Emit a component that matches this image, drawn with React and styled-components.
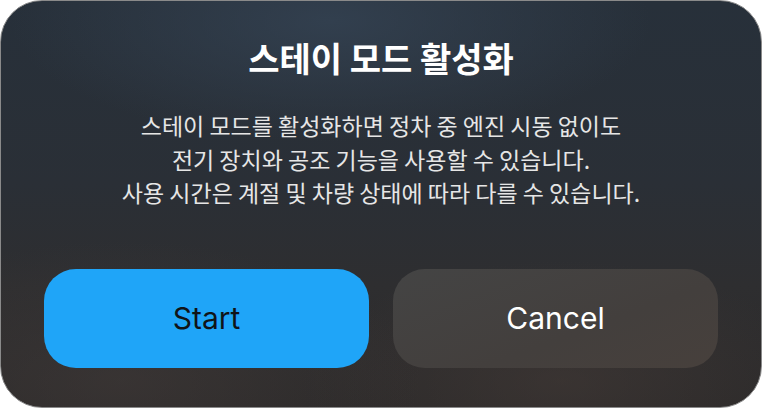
import React from "react";
import styled, { createGlobalStyle } from "styled-components";

const GlobalStyle = createGlobalStyle`
  html, body {
    margin: 0;
    padding: 0;
    background: #ffffff;
  }
`;

function App() {
  return (
    <>
      <GlobalStyle />
      <Dialog>
        <Title>스테이 모드 활성화</Title>
        <Body>
          스테이 모드를 활성화하면 정차 중 엔진 시동 없이도
          <br />
          전기 장치와 공조 기능을 사용할 수 있습니다.
          <br />
          사용 시간은 계절 및 차량 상태에 따라 다를 수 있습니다.
        </Body>
        <Actions>
          <Button $primary>Start</Button>
          <Button>Cancel</Button>
        </Actions>
      </Dialog>
    </>
  );
}

const Dialog = styled.div`
  box-sizing: border-box;
  width: 762px;
  height: 408px;
  border: 1.5px solid #8a8a8a;
  border-radius: 42px;
  overflow: hidden;
  display: flex;
  flex-direction: column;
  align-items: center;
  padding: 35px 43px 0;
  background:
    radial-gradient(ellipse 320px 120px at 330px 20px, rgba(52, 66, 82, 0.85), transparent),
    radial-gradient(ellipse 300px 140px at 120px 380px, rgba(70, 62, 60, 0.45), transparent),
    radial-gradient(ellipse 260px 120px at 560px 380px, rgba(70, 60, 56, 0.5), transparent),
    linear-gradient(180deg, #27303a 0%, #2a2f36 45%, #2e2e30 70%, #2c2a2a 100%);
  font-family: "Noto Sans CJK KR", "Noto Sans", sans-serif;
  color: #ffffff;
`;

const Title = styled.h1`
  margin: 0;
  font-size: 34px;
  font-weight: 700;
  line-height: 44px;
`;

const Body = styled.p`
  margin: 29px 0 0;
  font-size: 23px;
  line-height: 33.5px;
  text-align: center;
  color: #e6e6e6;
`;

const Actions = styled.div`
  margin-top: 59px;
  width: 100%;
  display: flex;
  gap: 24px;
`;

const Button = styled.button`
  flex: 1;
  height: 99px;
  border: none;
  border-radius: 32px;
  font-family: "Inter", "Lato", sans-serif;
  font-size: 30px;
  font-weight: 400;
  color: ${(p) => (p.$primary ? "#101418" : "#ffffff")};
  background: ${(p) =>
    p.$primary
      ? "#1fa5f8"
      : "linear-gradient(160deg, #444444 0%, #433f3d 60%, #47403c 100%)"};
`;

export default App;
